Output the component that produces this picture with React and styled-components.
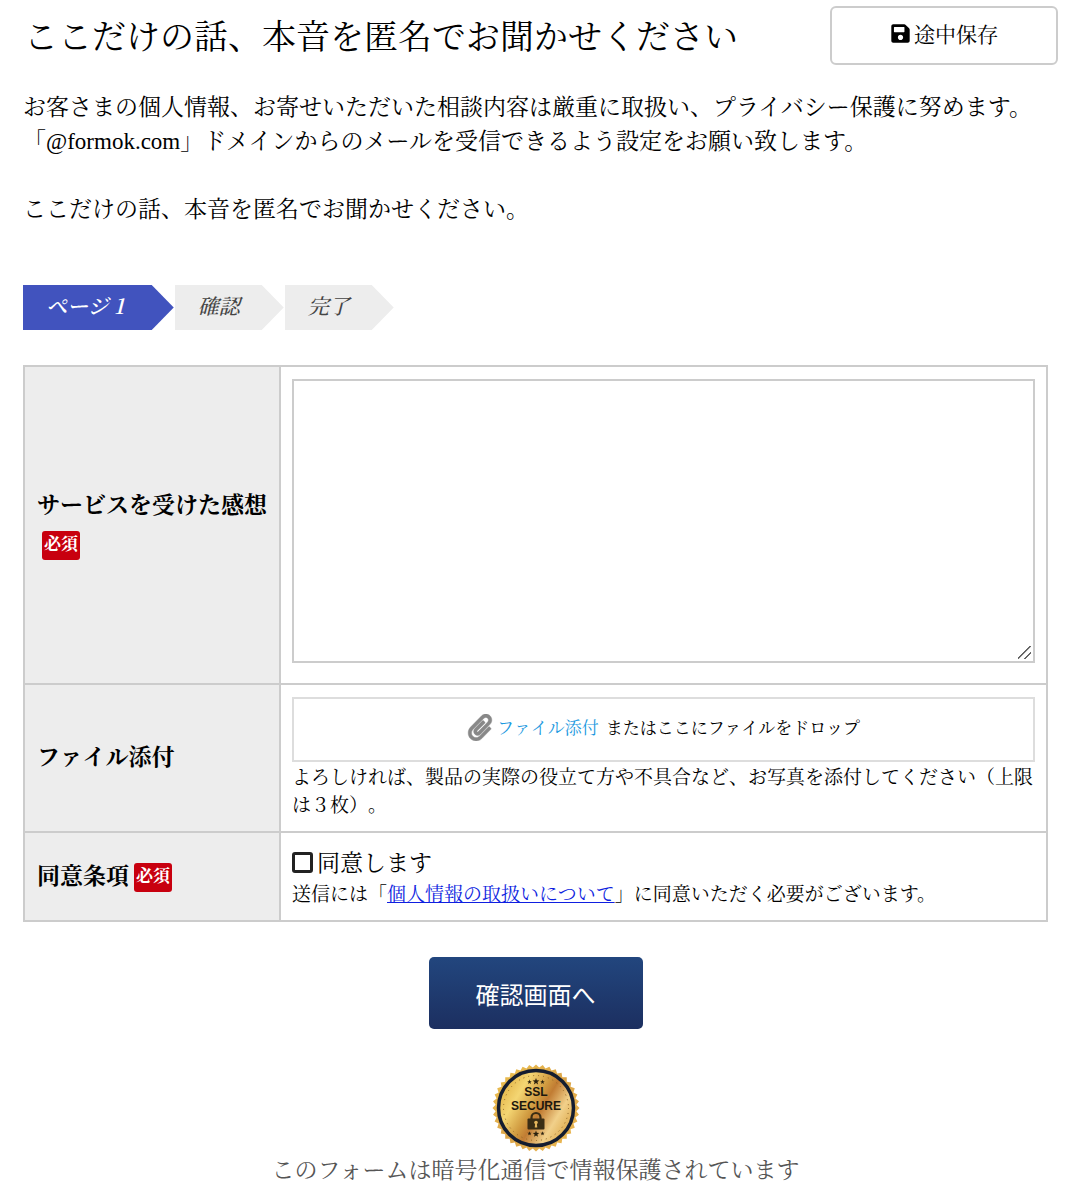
import React from "react";
import styled, { createGlobalStyle } from "styled-components";
import { FaPaperclip, FaSave } from "react-icons/fa";

const GlobalStyle = createGlobalStyle`
  * { box-sizing: border-box; }
  body {
    margin: 0;
    background: #fff;
    color: #000;
    font-family: "Noto Serif CJK JP", "Noto Serif JP", "Liberation Serif", "Noto Sans CJK JP", serif;
    font-size: 23px;
    line-height: 34px;
    text-spacing-trim: space-all;
  }
`;

const Header = styled.header`
  display: flex;
  justify-content: space-between;
  align-items: flex-start;
  gap: 16px;
  padding: 6px 19px 0 24px;
`;

const Title = styled.h1`
  margin: 0;
  padding-top: 4px;
  font-size: 34px;
  line-height: 50px;
  font-weight: 400;
`;

const SaveButton = styled.button`
  display: flex;
  align-items: center;
  justify-content: center;
  flex: none;
  gap: 3px;
  width: 228px;
  height: 59px;
  padding: 0 0 5px;
  border: 2px solid #ccc;
  border-radius: 6px;
  background: #fff;
  color: #000;
  font-family: inherit;
  font-size: 21px;
  line-height: 30px;
`;

const Main = styled.main`
  padding: 24px 29px 16px 23px;
`;

const Intro = styled.p`
  margin: 0 0 34px;
`;

const Latin = styled.span`
  font-family: "Liberation Serif", serif;
  line-height: 0;
`;

const Steps = styled.ol`
  display: flex;
  gap: 1px;
  margin: 60px 0 35px;
  padding: 0;
  list-style: none;
`;

const Step = styled.li`
  height: 45px;
  padding: 0 ${(p) => (p.$current ? 50 : 44)}px 0 23px;
  clip-path: polygon(0 0, calc(100% - 22px) 0, 100% 50%, calc(100% - 22px) 100%, 0 100%);
  background: ${(p) => (p.$current ? "#4153be" : "#ededed")};
  color: ${(p) => (p.$current ? "#fff" : "#444")};
  font-size: 21px;
  line-height: 40px;
  font-style: italic;
  font-weight: ${(p) => (p.$current ? 600 : 500)};
`;

const FormTable = styled.table`
  width: 100%;
  border-collapse: collapse;
  table-layout: fixed;
`;

const LabelCell = styled.th`
  width: 256px;
  padding: 11px 11px 15px 12px;
  border: 2px solid #ccc;
  background: #ededed;
  text-align: left;
  font-weight: 700;
  line-height: 38px;
`;

const FieldCell = styled.td`
  padding: 12px 11px ${(p) => p.$bottom}px;
  border: 2px solid #ccc;
`;

const Required = styled.span`
  display: inline-block;
  margin-left: 5px;
  padding: 0 2px 5px;
  border-radius: 3px;
  background: #c8000f;
  color: #fff;
  font-size: 17px;
  line-height: 24px;
  vertical-align: middle;
`;

const Message = styled.textarea`
  display: block;
  width: 100%;
  height: 284px;
  padding: 8px;
  border: 2px solid #ccc;
  font: inherit;
  resize: vertical;

  &::-webkit-resizer {
    background: linear-gradient(
        135deg,
        transparent 45%,
        #666 46% 53%,
        transparent 54% 71%,
        #666 72% 79%,
        transparent 80%
      )
      0 0 / 13px 13px no-repeat;
  }
`;

const DropZone = styled.div`
  display: flex;
  align-items: center;
  justify-content: center;
  height: 65px;
  padding-bottom: 5px;
  border: 2px solid #ddd;
  font-size: 17px;
  line-height: 24px;
`;

const ClipIcon = styled(FaPaperclip)`
  width: 26px;
  height: 27px;
  color: #888;
  stroke: #888;
  stroke-width: 8px;
`;

const AttachButton = styled.button`
  margin: 0 7px 0 4px;
  padding: 0;
  border: 0;
  background: none;
  color: #1c99e0;
  font: inherit;
`;

const Help = styled.p`
  margin: 0;
  font-size: 19px;
  line-height: 28px;
`;

const Agree = styled.label`
  display: flex;
  align-items: center;
  gap: 4px;
`;

const Check = styled.input`
  appearance: none;
  width: 21px;
  height: 21px;
  margin: 0;
  border: 3px solid #222;
  border-radius: 3px;
  background: #fff;
  &:checked { background: #4153be; }
`;

const PolicyLink = styled.a`
  color: #0f1fe0;
`;

const Submit = styled.button`
  display: block;
  width: 214px;
  height: 72px;
  margin: 35px auto;
  border: 0;
  border-radius: 5px;
  background: linear-gradient(#22467e, #1c2f60);
  color: #fff;
  font-family: "Noto Sans CJK JP", sans-serif;
  font-size: 24px;
`;

const Secure = styled.footer`
  display: flex;
  flex-direction: column;
  align-items: center;
  color: #555;
`;

const teeth = Array.from({ length: 80 }, (_, i) => {
  const a = (i * Math.PI) / 40;
  const r = i % 2 ? 40.5 : 43.5;
  return `${(44 + r * Math.cos(a)).toFixed(2)},${(44 + r * Math.sin(a)).toFixed(2)}`;
}).join(" ");

const star = (x, y, r) =>
  Array.from({ length: 10 }, (_, i) => {
    const a = -Math.PI / 2 + (i * Math.PI) / 5;
    const q = i % 2 ? r * 0.42 : r;
    return `${(x + q * Math.cos(a)).toFixed(2)},${(y + q * Math.sin(a)).toFixed(2)}`;
  }).join(" ");

const Seal = () => (
  <svg width="88" height="88" viewBox="0 0 88 88" role="img" aria-label="SSL SECURE">
    <defs>
      <linearGradient id="rim" x1="0" y1="0" x2="1" y2="1">
        <stop offset="0" stopColor="#efc450" />
        <stop offset=".5" stopColor="#dba448" />
        <stop offset="1" stopColor="#efbd55" />
      </linearGradient>
      <linearGradient id="gold" x1="0" y1=".2" x2="1" y2=".8">
        <stop offset="0" stopColor="#dfad3e" />
        <stop offset=".25" stopColor="#f4d673" />
        <stop offset=".46" stopColor="#d09a40" />
        <stop offset=".56" stopColor="#c17c33" />
        <stop offset=".76" stopColor="#f1d08a" />
        <stop offset="1" stopColor="#d9a13e" />
      </linearGradient>
    </defs>
    <polygon points={teeth} fill="url(#rim)" />
    <circle cx="44" cy="44" r="37.5" fill="url(#gold)" stroke="#141d30" strokeWidth="3.5" />
    <circle cx="44" cy="44" r="32.5" fill="none" stroke="#8d6425" strokeWidth="1" strokeDasharray="1 4" />
    <g fill="#2b220f">
      <polygon points={star(44, 17.5, 3.6)} />
      <polygon points={star(37.5, 18, 2.4)} />
      <polygon points={star(50.5, 18, 2.4)} />
      <polygon points={star(44, 70, 3.4)} />
      <polygon points={star(37.5, 69.5, 2.2)} />
      <polygon points={star(50.5, 69.5, 2.2)} />
    </g>
    <g fill="#1d180e" fontFamily="'Liberation Sans', sans-serif" fontWeight="700" textAnchor="middle">
      <text x="44" y="32" fontSize="12">SSL</text>
      <text x="44" y="46" fontSize="12">SECURE</text>
    </g>
    <path d="M39.5 56 V53.5 a4.5 4.5 0 0 1 9 0 V56" fill="none" stroke="#3a2d14" strokeWidth="2.2" />
    <rect x="35.5" y="54.5" width="17" height="11" rx="1" fill="#3a2d14" />
    <circle cx="44" cy="58.5" r="1.8" fill="#e5b65d" />
    <path d="M43.3 58.5 h1.4 l.6 5 h-2.6z" fill="#e5b65d" />
  </svg>
);

export default function App() {
  return (
    <>
      <GlobalStyle />
      <Header>
        <Title>ここだけの話、本音を匿名でお聞かせください</Title>
        <SaveButton type="button">
          <FaSave size={21} aria-hidden="true" />
          途中保存
        </SaveButton>
      </Header>
      <Main>
        <Intro>
          お客さまの個人情報、お寄せいただいた相談内容は厳重に取扱い、プライバシー保護に努めます。
          <br />
          「<Latin>@formok.com</Latin>」ドメインからのメールを受信できるよう設定をお願い致します。
        </Intro>
        <Intro>ここだけの話、本音を匿名でお聞かせください。</Intro>
        <Steps>
          <Step $current aria-current="step">ページ 1</Step>
          <Step>確認</Step>
          <Step>完了</Step>
        </Steps>
        <form onSubmit={(e) => e.preventDefault()}>
          <FormTable>
            <tbody>
              <tr>
                <LabelCell scope="row">
                  <label htmlFor="message">サービスを受けた感想</label>
                  <Required>必須</Required>
                </LabelCell>
                <FieldCell $bottom={20}>
                  <Message id="message" />
                </FieldCell>
              </tr>
              <tr>
                <LabelCell scope="row">ファイル添付</LabelCell>
                <FieldCell $bottom={13}>
                  <DropZone>
                    <ClipIcon aria-hidden="true" />
                    <AttachButton type="button">ファイル添付</AttachButton>
                    またはここにファイルをドロップ
                  </DropZone>
                  <Help>よろしければ、製品の実際の役立て方や不具合など、お写真を添付してください（上限は３枚）。</Help>
                </FieldCell>
              </tr>
              <tr>
                <LabelCell scope="row">
                  同意条項
                  <Required>必須</Required>
                </LabelCell>
                <FieldCell $bottom={13}>
                  <Agree>
                    <Check type="checkbox" />
                    同意します
                  </Agree>
                  <Help>
                    送信には「<PolicyLink href="#privacy">個人情報の取扱いについて</PolicyLink>」に同意いただく必要がございます。
                  </Help>
                </FieldCell>
              </tr>
            </tbody>
          </FormTable>
          <Submit type="submit">確認画面へ</Submit>
        </form>
        <Secure>
          <Seal />
          <span>このフォームは暗号化通信で情報保護されています</span>
        </Secure>
      </Main>
    </>
  );
}
